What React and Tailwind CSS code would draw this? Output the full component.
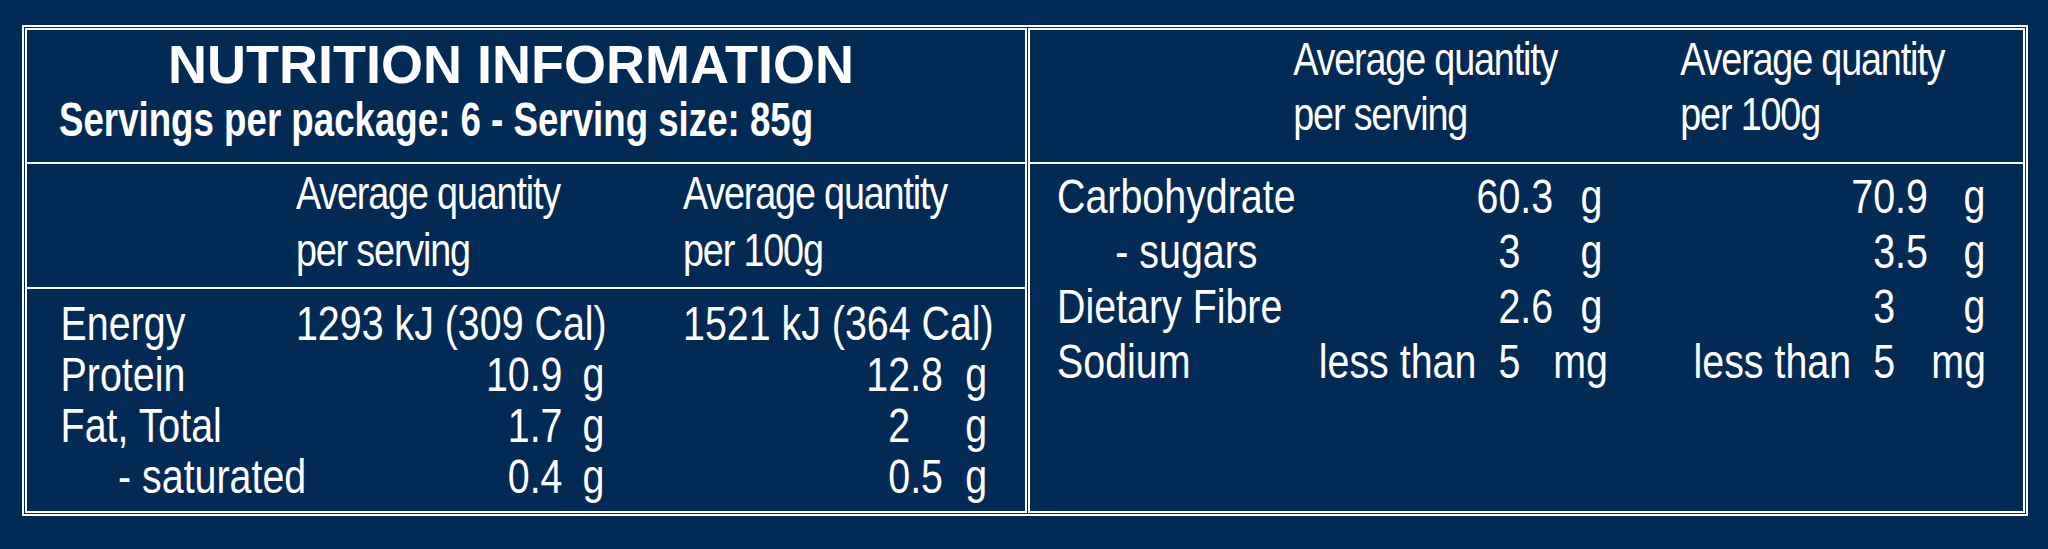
import React from 'react'

// Liberation Sans has Arial's widths; squeezed to 82% it gives Arial Narrow.
const sans = { fontFamily: '"Liberation Sans", Arial, sans-serif' }

const leftRows = [
  { label: 'Energy', full: ['1293 kJ (309 Cal)', '1521 kJ (364 Cal)'] },
  { label: 'Protein', a: '10.9', b: '12.8', unit: 'g' },
  { label: 'Fat, Total', a: '1.7', b: '2', unit: 'g' },
  { label: '- saturated', sub: true, a: '0.4', b: '0.5', unit: 'g' },
]

const rightRows = [
  { label: 'Carbohydrate', a: '60.3', b: '70.9', unit: 'g' },
  { label: '- sugars', sub: true, a: '3', b: '3.5', unit: 'g' },
  { label: 'Dietary Fibre', a: '2.6', b: '3', unit: 'g' },
  { label: 'Sodium', a: '5', b: '5', unit: 'mg', prefix: 'less than' },
]

function split(v) {
  const i = v.indexOf('.')
  return i === -1 ? [v, ''] : [v.slice(0, i), v.slice(i)]
}

// integer part right-aligned, decimals hang after it, unit right-aligned
function Value({ v, unit, prefix, fracW, unitW }) {
  const [int, frac] = split(v)
  return (
    <div className="flex whitespace-nowrap">
      <span className="flex-1 text-right">
        {prefix && <span className="mr-[27px]">{prefix}</span>}
        {int}
      </span>
      <span className={fracW}>{frac}</span>
      <span className={`${unitW} text-right`}>{unit}</span>
    </div>
  )
}

function LeftTable() {
  return (
    <div className="w-[1002px] h-full border-2 border-white flex flex-col overflow-hidden" style={sans}>
      {/* Title */}
      <div className="h-[134px] shrink-0 border-b-2 border-white pt-[7px]">
        <div className="pl-[141px] text-[54px] leading-[54px] font-bold whitespace-nowrap">
          NUTRITION INFORMATION
        </div>
        <div className="mt-[2px] pl-[32px] text-[48px] leading-[54px] font-bold">
          <span className="inline-block whitespace-nowrap origin-left scale-x-[0.764]">
            Servings per package: 6 - Serving size: 85g
          </span>
        </div>
      </div>

      {/* narrow part */}
      <div className="flex-1 w-[1217px] origin-left scale-x-[0.82] flex flex-col">
        <div className="h-[125px] shrink-0 border-b-2 border-white pt-[1px] grid grid-cols-[328px_376px_96px_371px] text-[46px] leading-[57px] tracking-[-1.4px] whitespace-nowrap">
          <div />
          <div>Average quantity<br />per serving</div>
          <div />
          <div>Average quantity<br />per 100g</div>
        </div>

        <div className="flex-1 pt-[9px] text-[48px] leading-[51px]">
          {leftRows.map((r) => (
            <div key={r.label} className="grid grid-cols-[328px_376px_96px_371px]">
              <div className={r.sub ? 'pl-[111px] whitespace-nowrap' : 'pl-[41px] whitespace-nowrap'}>{r.label}</div>
              {r.full ? (
                <div className="text-right whitespace-nowrap">{r.full[0]}</div>
              ) : (
                <Value v={r.a} unit={r.unit} fracW="w-[40px]" unitW="w-[51px]" />
              )}
              <div />
              {r.full ? (
                <div className="text-right whitespace-nowrap">{r.full[1]}</div>
              ) : (
                <Value v={r.b} unit={r.unit} fracW="w-[40px]" unitW="w-[54px]" />
              )}
            </div>
          ))}
        </div>
      </div>
    </div>
  )
}

function RightTable() {
  return (
    <div className="w-[997px] h-full border-2 border-white overflow-hidden" style={sans}>
      <div className="h-full w-[1211px] origin-left scale-x-[0.82] flex flex-col">
        <div className="h-[134px] shrink-0 border-b-2 border-white pt-[2px] grid grid-cols-[321px_377px_95px_372px] text-[46px] leading-[55px] tracking-[-1.4px] whitespace-nowrap">
          <div />
          <div>Average quantity<br />per serving</div>
          <div />
          <div>Average quantity<br />per 100g</div>
        </div>

        <div className="flex-1 pt-[5px] text-[48px] leading-[55px]">
          {rightRows.map((r) => (
            <div key={r.label} className="grid grid-cols-[321px_377px_95px_372px]">
              <div className={r.sub ? 'pl-[104px] whitespace-nowrap' : 'pl-[33px] whitespace-nowrap'}>{r.label}</div>
              <Value v={r.a} unit={r.unit} prefix={r.prefix} fracW="w-[40px]" unitW="w-[60px]" />
              <div />
              <Value v={r.b} unit={r.unit} prefix={r.prefix} fracW="w-[44px]" unitW="w-[66px]" />
            </div>
          ))}
        </div>
      </div>
    </div>
  )
}

export default function App() {
  return (
    <div className="w-[2048px] h-[549px] bg-[#032a55] text-white pl-[22px] pt-[25px]">
      <div className="w-[2006px] h-[491px] border-2 border-white p-[1px] flex gap-[1px]">
        <LeftTable />
        <RightTable />
      </div>
    </div>
  )
}
